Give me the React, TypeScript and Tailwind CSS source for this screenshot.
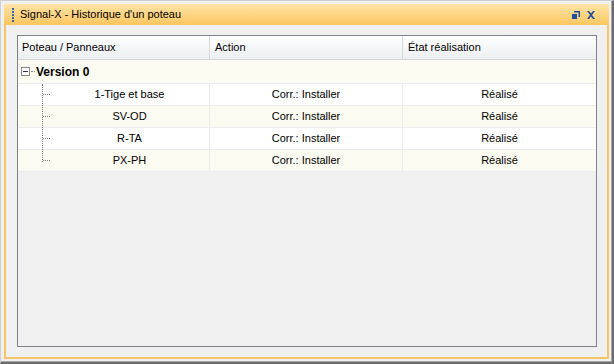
import React from 'react'

const rows = [
  { name: '1-Tige et base', action: 'Corr.: Installer', etat: 'Réalisé' },
  { name: 'SV-OD', action: 'Corr.: Installer', etat: 'Réalisé' },
  { name: 'R-TA', action: 'Corr.: Installer', etat: 'Réalisé' },
  { name: 'PX-PH', action: 'Corr.: Installer', etat: 'Réalisé' },
]

function Grip() {
  return (
    <div className="flex flex-col gap-[1px] ml-[6px] mr-[6px]">
      {[0, 1, 2, 3, 4].map((i) => (
        <div key={i} className="w-[2px] h-[2px] bg-[#3a64a8]" />
      ))}
    </div>
  )
}

export default function App() {
  return (
    <div
      className="w-[614px] h-[364px] bg-[#f0f0f0] border-l border-t border-[#cfcfcf] border-r-2 border-b-2 border-r-[#6c6c6c] border-b-[#6c6c6c] text-[11px] text-black"
      style={{ fontFamily: '"Liberation Sans", Arial, sans-serif' }}
    >
      <div className="w-full h-full border-r border-b border-[#a6a6a6] pl-[3px] pt-[3px] pr-[2px] pb-[2px]">
        <div className="w-full h-full flex flex-col border-2 border-t-0 border-[#f7c468]">
          {/* title bar */}
          <div className="h-[21px] flex items-center bg-gradient-to-b from-[#fee4a6] via-[#fed584] to-[#fdc65e] -mx-[2px] px-[2px]">
            <Grip />
            <span className="flex-1 leading-none">Signal-X - Historique d'un poteau</span>
            <svg className="w-[8px] h-[8px] mr-[7px]" viewBox="0 0 8 8">
              <path d="M2 0h6v6h-1.5V1.5H2z" fill="#1d4f9e" />
              <rect x="0" y="3" width="5" height="5" fill="#1d4f9e" />
            </svg>
            <svg className="w-[8px] h-[8px] mr-[12px]" viewBox="0 0 8 8">
              <path d="M0 0h2l2 2.5L6 0h2L5 4l3 4H6L4 5.5 2 8H0l3-4z" fill="#1d4f9e" />
            </svg>
          </div>

          {/* content */}
          <div className="flex-1 pl-[11px] pr-[10px] pt-[10px] pb-[10px] flex">
            <div className="flex-1 border border-[#7e8389] bg-[#f0f0f0] flex flex-col">
              {/* header */}
              <div className="h-[24px] grid grid-cols-[192px_193px_1fr] bg-gradient-to-b from-white to-[#eceef1] border-b border-[#d5d5d5]">
                <div className="flex items-center pl-[4px] border-r border-[#d8d8d8]">Poteau / Panneaux</div>
                <div className="flex items-center pl-[5px] border-r border-[#d8d8d8]">Action</div>
                <div className="flex items-center pl-[5px]">État réalisation</div>
              </div>

              {/* version row */}
              <div className="h-[24px] flex items-center bg-[#fcfbf2] border-b border-[#ececec] pl-[3px]">
                <div className="w-[9px] h-[9px] border border-[#8a8a8a] bg-white flex items-center justify-center">
                  <div className="w-[5px] h-[1px] bg-[#333]" />
                </div>
                <div className="w-[4px] border-t border-dotted border-[#808080] mx-[1px]" />
                <span className="font-bold text-[12px]">Version 0</span>
              </div>

              {/* child rows */}
              <div className="relative">
                <div className="absolute left-[24px] top-0 h-[78px] border-l border-dotted border-[#808080]" />
                {rows.map((r, i) => (
                  <div
                    key={r.name}
                    className={`h-[22px] grid grid-cols-[192px_193px_1fr] border-b border-[#ececec] ${
                      i % 2 === 0 ? 'bg-white' : 'bg-[#fcfbf2]'
                    }`}
                  >
                    <div className="flex items-center border-r border-[#ececec]">
                      <div className="w-[32px] h-full flex items-center pl-[25px]">
                        <div className="w-[7px] border-t border-dotted border-[#808080]" />
                      </div>
                      <div className="flex-1 text-center">{r.name}</div>
                    </div>
                    <div className="flex items-center justify-center border-r border-[#ececec]">{r.action}</div>
                    <div className="flex items-center justify-center">{r.etat}</div>
                  </div>
                ))}
              </div>
            </div>
          </div>
        </div>
      </div>
    </div>
  )
}
